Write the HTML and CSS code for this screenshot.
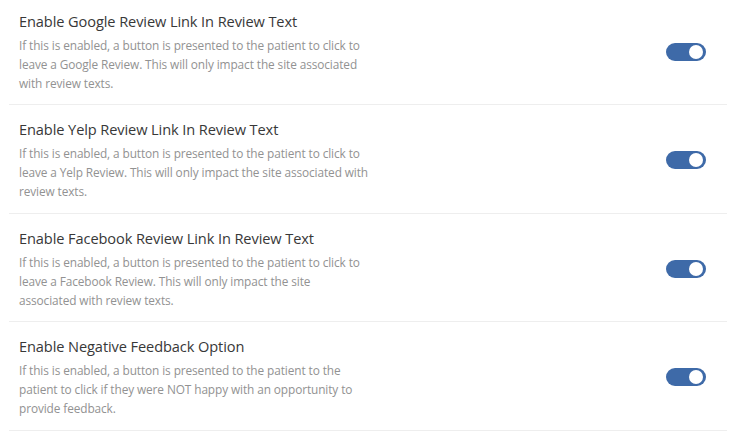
FILE: index.html
```html
<!DOCTYPE html>
<html>
<head>
<meta charset="utf-8">
<link rel="stylesheet" href="styles.css">
</head>
<body>
<div class="list">
  <div class="row">
    <div class="text">
      <div class="title">Enable Google Review Link In Review Text</div>
      <div class="desc">If this is enabled, a button is presented to the patient to click to leave a Google Review. This will only impact the site associated with review texts.</div>
    </div>
    <span class="toggle"><span class="knob"></span></span>
  </div>
  <div class="row">
    <div class="text">
      <div class="title">Enable Yelp Review Link In Review Text</div>
      <div class="desc">If this is enabled, a button is presented to the patient to click to leave a Yelp Review. This will only impact the site associated with review texts.</div>
    </div>
    <span class="toggle"><span class="knob"></span></span>
  </div>
  <div class="row">
    <div class="text">
      <div class="title">Enable Facebook Review Link In Review Text</div>
      <div class="desc">If this is enabled, a button is presented to the patient to click to leave a Facebook Review. This will only impact the site associated with review texts.</div>
    </div>
    <span class="toggle"><span class="knob"></span></span>
  </div>
  <div class="row">
    <div class="text">
      <div class="title">Enable Negative Feedback Option</div>
      <div class="desc">If this is enabled, a button is presented to the patient to the patient to click if they were NOT happy with an opportunity to provide feedback.</div>
    </div>
    <span class="toggle"><span class="knob"></span></span>
  </div>
</div>
</body>
</html>
```
FILE: styles.css
```css
html, body {
  margin: 0;
  padding: 0;
  background: #fff;
}
body {
  font-family: "Open Sans", "Noto Sans", sans-serif;
}
.list {
  margin-left: 9px;
  width: 718px;
}
.row {
  display: flex;
  align-items: center;
  justify-content: space-between;
  padding: 14px 21px 11.5px 10px;
  border-bottom: 1px solid #eeeeee;
}
.row:first-child {
  padding-top: 10.5px;
}
.text {
  display: flex;
  flex-direction: column;
  gap: 5px;
}
.title {
  font-size: 14.6px;
  line-height: 20px;
  color: #383838;
  letter-spacing: -0.1px;
}
.desc {
  font-size: 11.85px;
  line-height: 19px;
  color: #929292;
  width: 350px;
  letter-spacing: -0.1px;
}
.toggle {
  display: flex;
  align-items: center;
  justify-content: flex-end;
  width: 40px;
  height: 18px;
  border-radius: 9px;
  background: #3e6aa8;
  padding: 0 3px;
  box-sizing: border-box;
}
.knob {
  width: 14px;
  height: 14px;
  border-radius: 50%;
  background: #fff;
}
```
